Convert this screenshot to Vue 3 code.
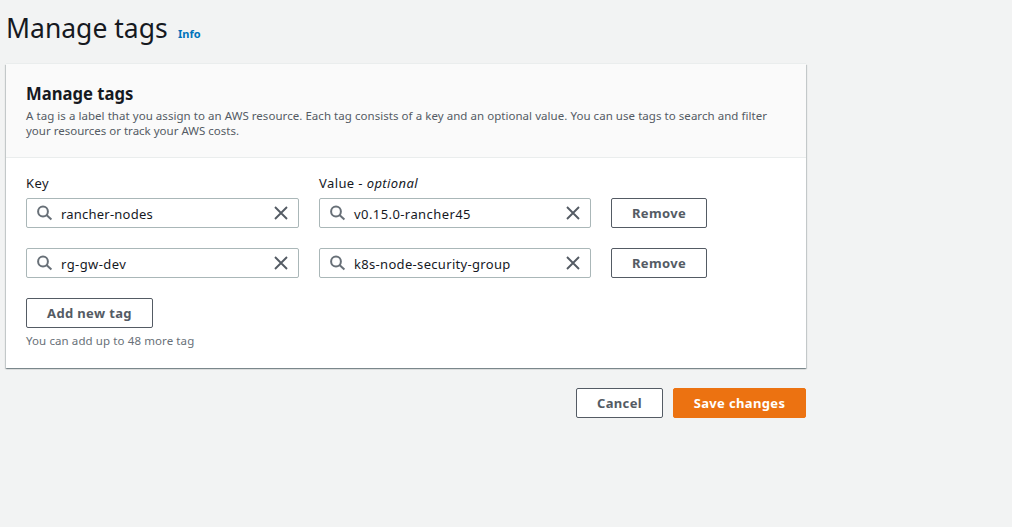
<script setup>
import { reactive } from 'vue'

const tags = reactive([
  { key: 'rancher-nodes', value: 'v0.15.0-rancher45', kc: 'snug', vc: 'wide' },
  { key: 'rg-gw-dev', value: 'k8s-node-security-group', kc: 'wide', vc: 'medium' },
])
</script>

<template>
  <main class="page">
    <header class="page-header">
      <h1><span>Manage tags</span></h1>
      <a class="info">Info</a>
    </header>

    <section class="panel">
      <div class="panel-header">
        <h2><span>Manage tags</span></h2>
        <p>
          <span class="line first">A tag is a label that you assign to an AWS resource. Each tag consists of a key and an optional value. You can use tags to search and filter</span>
          <span class="line">your resources or track your AWS costs.</span>
        </p>
      </div>
      <div class="panel-body">
        <div class="grid labels">
          <span>Key</span>
          <span>Value - <em>optional</em></span>
        </div>
        <div v-for="tag in tags" :key="tag.key" class="grid row">
          <div v-for="field in ['key', 'value']" :key="field" class="field">
            <svg class="search" width="16" height="16" viewBox="0 0 16 16">
              <circle cx="6" cy="6.5" r="4.9" />
              <path d="M9.5 10L14.4 14.6" />
            </svg>
            <span class="text" :class="field === 'key' ? tag.kc : tag.vc">{{ tag[field] }}</span>
            <svg class="clear" width="14" height="14" viewBox="0 0 14 14">
              <path d="M1 1L13 13M13 1L1 13" />
            </svg>
          </div>
          <button class="btn remove"><span>Remove</span></button>
        </div>
        <button class="btn add"><span>Add new tag</span></button>
        <div class="hint">You can add up to 48 more tag</div>
      </div>
    </section>

    <footer class="actions">
      <button class="btn cancel"><span>Cancel</span></button>
      <button class="btn save"><span>Save changes</span></button>
    </footer>
  </main>
</template>

<style>
body {
  background: #f2f3f3;
}
</style>

<style scoped>
.page {
  box-sizing: border-box;
  width: 806px;
  padding-left: 6px;
  font-family: "Noto Sans", "Open Sans", sans-serif;
  color: #16191f;
  white-space: nowrap;
}
.page-header {
  display: flex;
  align-items: baseline;
  height: 64px;
}
h1 {
  margin: 9px 0 0;
  width: 172px;
  font-size: 28px;
  font-weight: 400;
  line-height: 36px;
}
h1 span {
  display: inline-block;
  transform: scaleX(0.946);
  transform-origin: 0 50%;
}
.info {
  font-size: 11px;
  font-weight: 700;
  line-height: 16px;
  color: #0073bb;
}
.panel {
  height: 304px;
  background: #fff;
  box-shadow: 0 1px 1px 0 rgba(0, 28, 36, 0.3), 1px 1px 1px 0 rgba(0, 28, 36, 0.15), -1px 1px 1px 0 rgba(0, 28, 36, 0.15), 0 -1px 0 0 #eaeded;
}
.panel-header {
  box-sizing: border-box;
  height: 94px;
  padding: 18px 20px 0;
  background: #fafafa;
  border-bottom: 1px solid #eaeded;
}
h2 {
  margin: 0;
  font-size: 18px;
  font-weight: 700;
  line-height: 22px;
}
h2 span {
  display: inline-block;
  transform: scaleX(0.925);
  transform-origin: 0 50%;
}
p {
  margin: 4px 0 0;
  font-size: 11.5px;
  line-height: 15px;
  color: #545b64;
}
.line {
  display: block;
  width: max-content;
}
.first {
  letter-spacing: 0.047px;
}
.panel-body {
  padding: 15px 20px 0;
}
.grid {
  display: grid;
  grid-template-columns: 273px 272px 96px;
  column-gap: 20px;
}
.labels {
  height: 25px;
  font-size: 13px;
  line-height: 21px;
  letter-spacing: 0.4px;
}
.row {
  height: 30px;
  margin-bottom: 20px;
}
.field {
  box-sizing: border-box;
  display: flex;
  align-items: center;
  height: 30px;
  padding: 0 10px;
  border: 1px solid #aab7b8;
  border-radius: 2px;
  background: #fff;
  font-size: 13px;
}
.search {
  flex: none;
  margin-right: 8px;
  fill: none;
  stroke: #687078;
  stroke-width: 2;
}
.text {
  margin-top: 2px;
  line-height: 20px;
}
.snug {
  letter-spacing: 0.22px;
}
.medium {
  letter-spacing: 0.32px;
}
.wide {
  letter-spacing: 0.42px;
}
.clear {
  flex: none;
  margin-left: auto;
  fill: none;
  stroke: #545b64;
  stroke-width: 1.9;
}
.btn {
  box-sizing: border-box;
  display: block;
  height: 30px;
  padding: 0 0 1px;
  border: 1px solid #545b64;
  border-radius: 2px;
  background: #fff;
  color: #545b64;
  font-family: inherit;
  font-size: 13px;
  font-weight: 700;
  line-height: 20px;
  letter-spacing: 0.35px;
}
.add {
  width: 127px;
}
.hint {
  margin-top: 5px;
  font-size: 11.5px;
  line-height: 16px;
  letter-spacing: 0.1px;
  color: #687078;
}
.actions {
  display: flex;
  justify-content: flex-end;
  gap: 10px;
  margin-top: 20px;
}
.cancel {
  width: 87px;
}
.save {
  width: 133px;
  border-color: #ec7211;
  background: #ec7211;
  color: #fff;
}
</style>
